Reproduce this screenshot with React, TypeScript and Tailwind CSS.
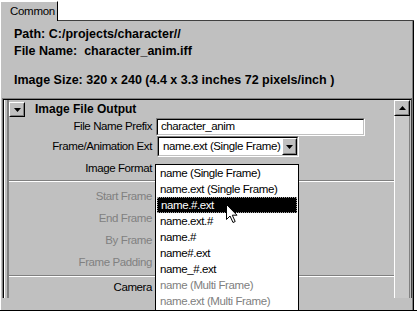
import React from "react";

function Sunken({ className, children }: { className: string; children?: React.ReactNode }) {
  return (
    <div className={`border border-t-[#808080] border-l-[#808080] border-b-white border-r-white ${className}`}>
      <div className="h-full border border-t-black border-l-black border-b-[#c0c0c0] border-r-[#c0c0c0] bg-white flex items-center">
        {children}
      </div>
    </div>
  );
}

function Raised({ className, children }: { className: string; children?: React.ReactNode }) {
  return (
    <div className={`border border-t-white border-l-white border-b-black border-r-black bg-[#c0c0c0] ${className}`}>
      <div className="h-full w-full border border-t-[#c0c0c0] border-l-[#c0c0c0] border-b-[#808080] border-r-[#808080] flex items-center justify-center">
        {children}
      </div>
    </div>
  );
}

function DownTri() {
  return (
    <svg width="7" height="4" viewBox="0 0 7 4">
      <path d="M0 0 H7 L3.5 4 Z" fill="black" />
    </svg>
  );
}

function UpTri() {
  return (
    <svg width="7" height="4" viewBox="0 0 7 4">
      <path d="M0 4 H7 L3.5 0 Z" fill="black" />
    </svg>
  );
}

function Label({ children, gray }: { children: React.ReactNode; gray?: boolean }) {
  return (
    <div className={`w-[143px] text-right text-[11.5px] tracking-[-0.4px] ${gray ? "text-[#808080]" : "text-black"}`}>
      {children}
    </div>
  );
}

function Separator() {
  return (
    <div className="flex flex-col">
      <div className="h-[1px] bg-[#808080]" />
      <div className="h-[1px] bg-white" />
    </div>
  );
}

const items: { t: string; sel?: boolean; dis?: boolean }[] = [
  { t: "name (Single Frame)" },
  { t: "name.ext (Single Frame)" },
  { t: "name.#.ext", sel: true },
  { t: "name.ext.#" },
  { t: "name.#" },
  { t: "name#.ext" },
  { t: "name_#.ext" },
  { t: "name (Multi Frame)", dis: true },
  { t: "name.ext (Multi Frame)", dis: true },
];

export default function App() {
  return (
    <div className="relative w-[417px] h-[311px] bg-white overflow-hidden font-['Liberation_Sans',Arial,sans-serif] text-black border-b border-black">
      {/* tab row */}
      <div className="flex h-[21px]">
        <div className="w-[58px] h-[20px] mt-[1px] bg-[#c0c0c0] border-l border-t border-white border-r border-r-black text-[11.5px] tracking-[-0.3px] leading-[19px] pl-[9px]">
          Common
        </div>
        <div className="w-[356px] border-b border-[#404040]" />
      </div>

      {/* panel */}
      <div className="w-[414px] h-[289px] bg-[#c0c0c0] border-l border-white border-r border-r-black">
        <div className="h-full border-r border-r-[#808080]">
          <div className="pl-[13px] pt-[5px] text-[12.5px] font-bold leading-[17px]">
            <div>Path: C:/projects/character//</div>
            <div className="whitespace-pre">File Name:  character_anim.iff</div>
            <div className="mt-[12px]">Image Size: 320 x 240 (4.4 x 3.3 inches 72 pixels/inch )</div>
          </div>

          {/* sunken frame */}
          <div className="mt-[9px] ml-[1px] w-[410px] h-[200px] border-l border-t border-[#808080] border-r border-r-[#404040]">
            <div className="h-full border-l border-t border-black flex">
              {/* content */}
              <div className="w-[390px] h-full border-l border-white">
                <div className="ml-[2px] h-full border-l-2 border-[#808080] flex flex-col">
                  {/* header */}
                  <div className="h-[18px] flex items-start">
                    <Raised className="w-[16px] h-[15px] mt-[2px]">
                      <DownTri />
                    </Raised>
                    <div className="ml-[10px] text-[12px] font-bold leading-[16px] mt-[1px]">Image File Output</div>
                  </div>
                  {/* prefix */}
                  <div className="h-[22px] flex items-center">
                    <Label>File Name Prefix</Label>
                    <Sunken className="ml-[4px] w-[209px] h-[18px]">
                      <span className="pl-[3px] text-[11.5px] tracking-[-0.4px]">character_anim</span>
                    </Sunken>
                  </div>
                  {/* ext */}
                  <div className="h-[22px] flex items-center">
                    <Label>Frame/Animation Ext</Label>
                    <Sunken className="ml-[5px] w-[142px] h-[21px]">
                      <span className="pl-[4px] text-[11.5px] tracking-[-0.4px] flex-1">name.ext (Single Frame)</span>
                      <Raised className="w-[15px] h-[17px]">
                        <DownTri />
                      </Raised>
                    </Sunken>
                  </div>
                  {/* format */}
                  <div className="h-[26px] flex items-center">
                    <Label>Image Format</Label>
                  </div>
                  <Separator />
                  <div className="pt-[3px]">
                    <div className="h-[22px] flex items-center">
                      <Label gray>Start Frame</Label>
                    </div>
                    <div className="h-[22px] flex items-center">
                      <Label gray>End Frame</Label>
                    </div>
                    <div className="h-[22px] flex items-center">
                      <Label gray>By Frame</Label>
                    </div>
                    <div className="h-[22px] flex items-center">
                      <Label gray>Frame Padding</Label>
                    </div>
                  </div>
                  <div className="h-[2px]" />
                  <Separator />
                  <div className="h-[24px] flex items-center">
                    <Label>Camera</Label>
                  </div>
                </div>
              </div>
              {/* scrollbar */}
              <div className="w-[16px] h-full flex flex-col">
                <Raised className="w-[16px] h-[16px]">
                  <UpTri />
                </Raised>
                <div className="flex-1 border-l border-white border-r border-r-[#808080] bg-[#c8c8c8]" />
              </div>
            </div>
          </div>
        </div>
      </div>

      {/* dropdown list */}
      <div className="absolute left-[155px] top-[164px] w-[144px] h-[148px] bg-white border border-black">
        {items.map((it) => (
          <div
            key={it.t}
            className={`h-[16px] text-[11.5px] tracking-[-0.4px] leading-[14px] ${
              it.sel
                ? "mx-[1px] bg-black text-white border border-dotted border-[#a0a0a0] pl-[3px]"
                : it.dis
                ? "text-[#808080] pl-[4px] pt-[1px]"
                : "pl-[4px] pt-[1px]"
            }`}
          >
            {it.t}
          </div>
        ))}
      </div>

      {/* cursor */}
      <svg className="absolute left-[226px] top-[204px]" width="13" height="20" viewBox="0 0 13 20">
        <path d="M0.5 0.5 L0.5 15.5 L4 12 L7 18.5 L9.2 17.5 L6.3 11.2 L11 11.2 Z" fill="white" stroke="black" strokeWidth="1" strokeLinejoin="miter" />
      </svg>
    </div>
  );
}
